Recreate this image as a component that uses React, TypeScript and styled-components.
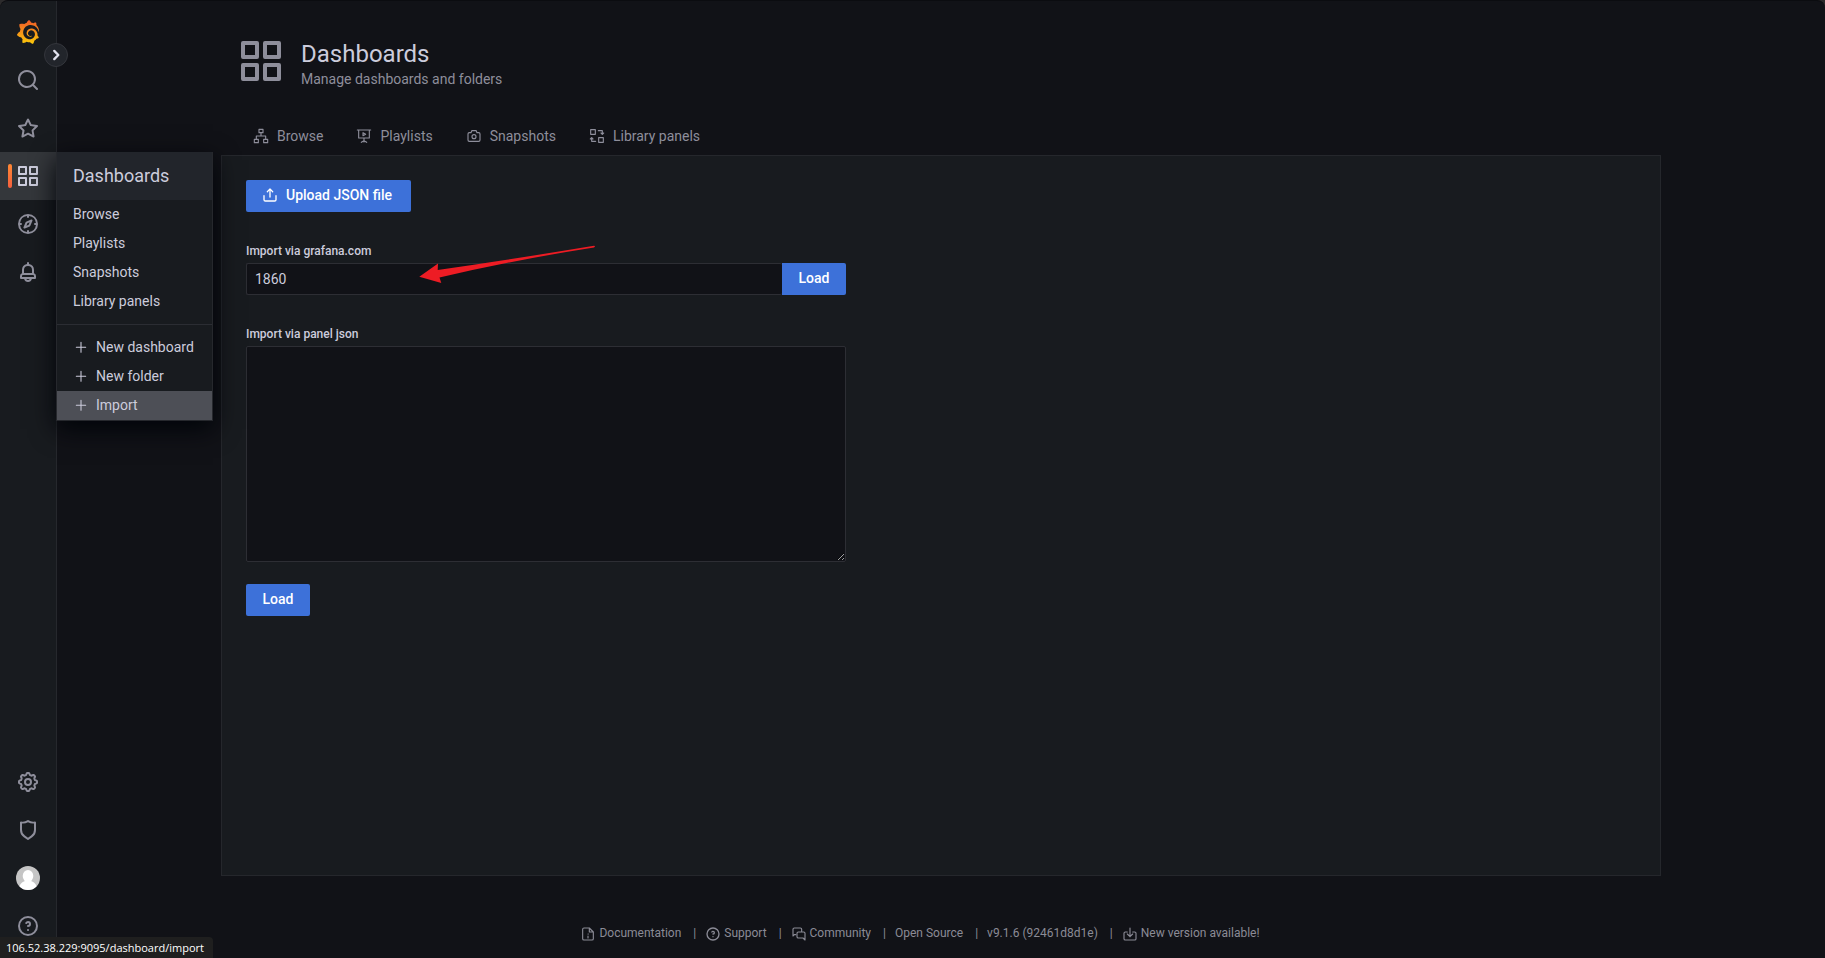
import React from 'react';
import styled, { createGlobalStyle, css } from 'styled-components';
import { SiGrafana } from 'react-icons/si';

const GlobalStyle = createGlobalStyle`
  *, *::before, *::after { box-sizing: border-box; }
  body {
    margin: 0;
    background: #2c2b2c;
    color: #ccccdc;
    font: 400 14px/22px Roboto, "Liberation Sans", sans-serif;
  }
  a { color: inherit; text-decoration: none; }
  button, input, textarea { font: inherit; color: inherit; }
  ul { list-style: none; margin: 0; padding: 0; }
`;

const paths = {
  apps: 'M10,13H3a1,1,0,0,0-1,1v7a1,1,0,0,0,1,1h7a1,1,0,0,0,1-1V14A1,1,0,0,0,10,13ZM9,20H4V15H9ZM21,2H14a1,1,0,0,0-1,1v7a1,1,0,0,0,1,1h7a1,1,0,0,0,1-1V3A1,1,0,0,0,21,2ZM20,9H15V4h5Zm1,4H14a1,1,0,0,0-1,1v7a1,1,0,0,0,1,1h7a1,1,0,0,0,1-1V14A1,1,0,0,0,21,13Zm-1,7H15V15h5ZM10,2H3A1,1,0,0,0,2,3v7a1,1,0,0,0,1,1h7a1,1,0,0,0,1-1V3A1,1,0,0,0,10,2ZM9,9H4V4H9Z',
  search: 'M21.71,20.29,18,16.61A9,9,0,1,0,16.61,18l3.68,3.68a1,1,0,0,0,1.42,0A1,1,0,0,0,21.71,20.29ZM11,18a7,7,0,1,1,7-7A7,7,0,0,1,11,18Z',
  star: 'M22,9.67A1,1,0,0,0,21.14,9l-5.69-.83L12.9,3a1,1,0,0,0-1.8,0L8.55,8.16,2.86,9a1,1,0,0,0-.81.68,1,1,0,0,0,.25,1l4.13,4-1,5.68A1,1,0,0,0,6.9,21.44L12,18.77l5.1,2.67a.93.93,0,0,0,.46.12,1,1,0,0,0,.59-.19,1,1,0,0,0,.4-1l-1-5.68,4.13-4A1,1,0,0,0,22,9.67Zm-6.15,4a1,1,0,0,0-.29.88l.72,4.2-3.76-2a1.06,1.06,0,0,0-.94,0l-3.76,2,.72-4.2a1,1,0,0,0-.29-.88l-3-3,4.21-.61a1,1,0,0,0,.76-.55L12,5.7l1.88,3.82a1,1,0,0,0,.76.55l4.21.61Z',
  compass: 'M12,2A10,10,0,1,0,22,12,10,10,0,0,0,12,2Zm1,17.93V19a1,1,0,0,0-2,0v.93A8,8,0,0,1,4.07,13H5a1,1,0,0,0,0-2H4.07A8,8,0,0,1,11,4.07V5a1,1,0,0,0,2,0V4.07A8,8,0,0,1,19.93,11H19a1,1,0,0,0,0,2h.93A8,8,0,0,1,13,19.93ZM15.14,7.55l-5,2.12a1,1,0,0,0-.52.52l-2.12,5a1,1,0,0,0,.21,1.1,1,1,0,0,0,.7.29.93.93,0,0,0,.4-.08l5-2.12a1,1,0,0,0,.52-.52l2.12-5a1,1,0,0,0-1.31-1.31Zm-2.49,5.1-2.28,1,1-2.28,2.28-1Z',
  bell: 'M18,13.18V10a6,6,0,0,0-5-5.91V3a1,1,0,0,0-2,0V4.09A6,6,0,0,0,6,10v3.18A3,3,0,0,0,4,16v2a1,1,0,0,0,1,1H8.14a4,4,0,0,0,7.72,0H19a1,1,0,0,0,1-1V16A3,3,0,0,0,18,13.18ZM8,10a4,4,0,0,1,8,0v3H8Zm4,10a2,2,0,0,1-1.72-1h3.44A2,2,0,0,1,12,20Zm6-3H6V16a1,1,0,0,1,1-1H17a1,1,0,0,1,1,1Z',
  shield: 'M19.63,3.65a1,1,0,0,0-.84-.2,8,8,0,0,1-6.22-1.27,1,1,0,0,0-1.14,0A8,8,0,0,1,5.21,3.45a1,1,0,0,0-.84.2A1,1,0,0,0,4,4.43v7.45a9,9,0,0,0,3.77,7.33l3.65,2.6a1,1,0,0,0,1.16,0l3.65-2.6A9,9,0,0,0,20,11.88V4.43A1,1,0,0,0,19.63,3.65ZM18,11.88a7,7,0,0,1-2.93,5.7L12,19.77,8.93,17.58A7,7,0,0,1,6,11.88V5.58a10,10,0,0,0,6-1.39,10,10,0,0,0,6,1.39Z',
  question: 'M11.29,15.29a1.58,1.58,0,0,0-.12.15.76.76,0,0,0-.09.18.64.64,0,0,0-.06.18,1.36,1.36,0,0,0,0,.2.84.84,0,0,0,.08.38.9.9,0,0,0,.54.54.94.94,0,0,0,.76,0,.9.9,0,0,0,.54-.54A1,1,0,0,0,13,16a1,1,0,0,0-.29-.71A1,1,0,0,0,11.29,15.29ZM12,2A10,10,0,1,0,22,12,10,10,0,0,0,12,2Zm0,18a8,8,0,1,1,8-8A8,8,0,0,1,12,20ZM12,7A3,3,0,0,0,9.4,8.5a1,1,0,1,0,1.73,1A1,1,0,0,1,12,9a1,1,0,0,1,0,2,1,1,0,1,0,0,2,3,3,0,0,0,0-6Z',
  upload: 'M8.71,7.71,11,5.41V15a1,1,0,0,0,2,0V5.41l2.29,2.3a1,1,0,0,0,1.42,0,1,1,0,0,0,0-1.42l-4-4a1,1,0,0,0-.33-.21,1,1,0,0,0-.76,0,1,1,0,0,0-.33.21l-4,4A1,1,0,1,0,8.71,7.71ZM21,12a1,1,0,0,0-1,1v6a1,1,0,0,1-1,1H5a1,1,0,0,1-1-1V13a1,1,0,0,0-2,0v6a3,3,0,0,0,3,3H19a3,3,0,0,0,3-3V13A1,1,0,0,0,21,12Z',
};

const outlines = {
  sitemap: 'M9 2h6v5H9zM12 7v5M5 17v-5h14v5M2 17h6v5H2zM16 17h6v5h-6z',
  presentation: 'M2 3h20M4 3v12h16V3M12 15v6M8 21.500l4-2.500l4 2.500M10.500 7v4.500l4-2.200z',
  camera: 'M5 7h2.500l1.200-3h6.600l1.200 3H19a2 2 0 0 1 2 2v9a2 2 0 0 1-2 2H5a2 2 0 0 1-2-2V9a2 2 0 0 1 2-2zM15 13a3 3 0 1 1-6 0a3 3 0 0 1 6 0z',
  library: 'M2.500 2.500h7v7h-7zM14.500 14.500h7v7h-7zM14 4h6v5M18 7.500l2 2l2-2M10 20H4v-5M2 16.500l2-2l2 2',
  document: 'M14 3H6a2 2 0 0 0-2 2v14a2 2 0 0 0 2 2h12a2 2 0 0 0 2-2V9zM14 3v6h6M12 12h.5M12 15v3',
  comments: 'M7 13H5l-2 2V5a2 2 0 0 1 2-2h9a2 2 0 0 1 2 2v3M11 9h8a2 2 0 0 1 2 2v10l-3-3h-7a2 2 0 0 1-2-2v-5a2 2 0 0 1 2-2z',
  download: 'M8 9H5a2 2 0 0 0-2 2v8a2 2 0 0 0 2 2h14a2 2 0 0 0 2-2v-8a2 2 0 0 0-2-2h-3M12 3v13M8 12l4 4l4-4',
  plus: 'M12 5v15M5 12.500h14',
  chevron: 'M9 5l7 7l-7 7',
  cog: (() => {
    const points: string[] = [];
    for (let i = 0; i < 96; i += 1) {
      const angle = (i / 96) * Math.PI * 2;
      const r = 8.1 + 0.95 * Math.tanh(2.4 * Math.cos(8 * angle));
      points.push(`${(12 + r * Math.sin(angle)).toFixed(2)} ${(12 - r * Math.cos(angle)).toFixed(2)}`);
    }
    return `M${points.join('L')}ZM15 12a3 3 0 1 1-6 0a3 3 0 0 1 6 0z`;
  })(),
};

type IconName = keyof typeof paths | keyof typeof outlines;

const Svg = styled.svg`
  display: block;
  flex: none;
`;

function Icon({ name, size = 24, weight = 2 }: { name: IconName; size?: number; weight?: number }) {
  return (
    <Svg width={size} height={size} viewBox="0 0 24 24" aria-hidden="true">
      {name in paths ? (
        <path fill="currentColor" d={paths[name as keyof typeof paths]} />
      ) : (
        <path
          fill="none"
          stroke="currentColor"
          strokeWidth={weight}
          strokeLinejoin="round"
          strokeLinecap="round"
          d={outlines[name as keyof typeof outlines]}
        />
      )}
    </Svg>
  );
}

const Shell = styled.div`
  display: flex;
  min-height: 100vh;
  background: #111217;
  border-top: 1px solid #0b0c10;
  border-radius: 8px 8px 0 0;
`;

const Sidebar = styled.nav`
  position: relative;
  z-index: 2;
  flex: none;
  display: flex;
  flex-direction: column;
  width: 57px;
  padding: 7px 0 8px;
  background: #181b1f;
  border-right: 1px solid #26282d;
  border-radius: 8px 0 0 0;
`;

const GradientDefs = styled.svg`
  position: absolute;
`;

const NavGroup = styled.ul<{ $bottom?: boolean }>`
  ${(p) => p.$bottom && 'margin-top: auto;'}
`;

const NavItem = styled.li`
  position: relative;
`;

const NavLink = styled.a<{ $active?: boolean }>`
  display: flex;
  align-items: center;
  justify-content: center;
  height: 48px;
  color: #8e8e9b;
  ${(p) =>
    p.$active &&
    css`
      color: #ccccdc;
      background: #34373b;
      &::before {
        content: '';
        position: absolute;
        left: 8px;
        top: 12px;
        width: 4px;
        height: 24px;
        border-radius: 2px;
        background: linear-gradient(#ff8833, #f55f3e);
      }
    `}
`;

const Expand = styled.button`
  position: absolute;
  z-index: 1;
  top: 42px;
  right: -12px;
  display: flex;
  align-items: center;
  justify-content: center;
  width: 24px;
  height: 24px;
  padding: 0;
  color: #e0e0ec;
  background: #22252b;
  border: 1px solid #34363c;
  border-radius: 50%;
`;

const Flyout = styled.div`
  position: absolute;
  top: 0;
  left: 100%;
  width: 157px;
  background: #181b1f;
  border: 1px solid #26282d;
  border-top: 0;
  box-shadow: 0 8px 24px rgb(1, 4, 9);
`;

const FlyoutTitle = styled.a`
  display: block;
  padding: 0 16px;
  font-size: 18px;
  line-height: 48px;
  background: #22252b;
`;

const FlyoutLink = styled.a<{ $active?: boolean }>`
  display: flex;
  align-items: center;
  gap: 7px;
  height: 29px;
  padding: 0 16px 2px;
  white-space: nowrap;
  background: ${(p) => (p.$active ? '#4d4f56' : 'transparent')};
`;

const FlyoutDivider = styled.hr`
  height: 1px;
  margin: 8px 0;
  border: 0;
  background: #2b2d33;
`;

const Main = styled.main`
  flex: 1;
  min-width: 0;
  display: flex;
  flex-direction: column;
`;

const Container = styled.div`
  flex: 1;
  display: flex;
  flex-direction: column;
  width: 100%;
  max-width: 1440px;
  margin: 0 auto;
`;

const PageHeader = styled.header`
  display: flex;
  gap: 16px;
  padding: 36px 16px 35px;
  color: #8e8e9b;
`;

const PageTitle = styled.h1`
  margin: 0;
  padding-top: 2px;
  font-size: 24px;
  font-weight: 400;
  line-height: 30px;
  color: #ccccdc;
`;

const Subtitle = styled.p`
  margin: 0;
  line-height: 20px;
`;

const Tabs = styled.nav`
  display: flex;
  gap: 33px;
  padding: 0 32px 7px;
`;

const Tab = styled.a`
  display: flex;
  align-items: center;
  gap: 8px;
  line-height: 24px;
  color: #8e8e9b;
`;

const Panel = styled.section`
  flex: 1;
  padding: 24px;
  background: #181b1f;
  border: 1px solid #25272c;
`;

const Form = styled.form`
  display: flex;
  flex-direction: column;
  align-items: flex-start;
  width: 600px;
  max-width: 100%;
`;

const Button = styled.button<{ $attached?: boolean; $wide?: boolean }>`
  display: flex;
  align-items: center;
  justify-content: ${(p) => (p.$wide ? 'flex-start' : 'center')};
  gap: 8px;
  min-width: ${(p) => (p.$wide ? '165px' : '64px')};
  height: 32px;
  padding: 0 16px 2px;
  font-weight: 500;
  color: #ffffff;
  background: #3d71d9;
  border: 0;
  border-radius: ${(p) => (p.$attached ? '0 2px 2px 0' : '2px')};
`;

const Label = styled.label`
  margin-top: 32px;
  margin-bottom: 4px;
  font-size: 12px;
  font-weight: 500;
  line-height: 15px;
`;

const InputRow = styled.div`
  position: relative;
  display: flex;
  width: 100%;
`;

const field = css`
  background: #111217;
  border: 1px solid #2d2e34;
  border-radius: 2px;
  outline: none;
`;

const TextInput = styled.input`
  ${field}
  flex: 1;
  min-width: 0;
  height: 32px;
  padding: 0 8px;
  border-right: 0;
`;

const TextArea = styled.textarea`
  ${field}
  display: block;
  width: 100%;
  height: 216px;
  margin-bottom: 22px;
  padding: 8px;
`;

const Arrow = styled.svg`
  position: absolute;
  left: 168px;
  top: -20px;
  pointer-events: none;
`;

const Footer = styled.footer`
  display: flex;
  justify-content: center;
  padding: 48px 42px 16px 0;
  font-size: 12px;
  line-height: 18px;
  color: #8b8b96;
`;

const FooterList = styled.ul`
  display: flex;
`;

const FooterItem = styled.li`
  display: flex;
  & + &::before {
    content: '|';
    padding: 0 9px 0 12px;
  }
`;

const FooterLink = styled.a`
  display: flex;
  align-items: center;
  gap: 3px;
  svg {
    margin-top: 2px;
  }
`;

const StatusBar = styled.div`
  position: fixed;
  z-index: 3;
  left: 0;
  bottom: 0;
  padding: 0 9px 0 6px;
  font: 11px/21px "Open Sans", "Noto Sans", sans-serif;
  color: #ffffff;
  background: #1f1f1f;
  border-top-right-radius: 4px;
`;

const topNav: { icon: IconName; label: string }[] = [
  { icon: 'search', label: 'Search dashboards' },
  { icon: 'star', label: 'Starred' },
  { icon: 'apps', label: 'Dashboards' },
  { icon: 'compass', label: 'Explore' },
  { icon: 'bell', label: 'Alerting' },
];

const tabs: { icon: IconName; label: string }[] = [
  { icon: 'sitemap', label: 'Browse' },
  { icon: 'presentation', label: 'Playlists' },
  { icon: 'camera', label: 'Snapshots' },
  { icon: 'library', label: 'Library panels' },
];

const footerLinks: { icon?: IconName; label: string }[] = [
  { icon: 'document', label: 'Documentation' },
  { icon: 'question', label: 'Support' },
  { icon: 'comments', label: 'Community' },
  { label: 'Open Source' },
  { label: 'v9.1.6 (92461d8d1e)' },
  { icon: 'download', label: 'New version available!' },
];

function DashboardsMenu() {
  return (
    <Flyout>
      <FlyoutTitle href="#dashboards">Dashboards</FlyoutTitle>
      {tabs.map((t) => (
        <FlyoutLink key={t.label} href="#browse">{t.label}</FlyoutLink>
      ))}
      <FlyoutDivider />
      {['New dashboard', 'New folder', 'Import'].map((label) => (
        <FlyoutLink key={label} href="#new" $active={label === 'Import'}>
          <Icon name="plus" size={16} weight={1.6} />
          {label}
        </FlyoutLink>
      ))}
    </Flyout>
  );
}

function Avatar() {
  return (
    <Svg width="24" height="24" viewBox="0 0 24 24" aria-hidden="true">
      <clipPath id="avatar-clip"><circle cx="12" cy="12" r="12" /></clipPath>
      <g clipPath="url(#avatar-clip)">
        <rect width="24" height="24" fill="#c5c5c5" />
        <ellipse cx="12" cy="10" rx="5.3" ry="6" fill="#fff" />
        <path d="M3 24c0-6 3-8 6-9h6c3 1 6 3 6 9z" fill="#fff" />
      </g>
    </Svg>
  );
}

export default function App() {
  return (
    <>
      <GlobalStyle />
      <Shell>
        <Sidebar aria-label="Main menu">
          <GradientDefs width="0" height="0" aria-hidden="true">
            <linearGradient id="brand" x1="0" y1="0" x2="0" y2="1">
              <stop offset="0" stopColor="#f05a28" />
              <stop offset="1" stopColor="#fbca0a" />
            </linearGradient>
          </GradientDefs>
          <NavLink href="#home" aria-label="Home">
            <SiGrafana size={24} fill="url(#brand)" />
          </NavLink>
          <Expand type="button" aria-label="Expand navigation">
            <Icon name="chevron" size={14} weight={4} />
          </Expand>
          <NavGroup>
            {topNav.map((n) => (
              <NavItem key={n.label}>
                <NavLink href="#nav" aria-label={n.label} $active={n.icon === 'apps'}>
                  <Icon name={n.icon} />
                </NavLink>
                {n.icon === 'apps' && <DashboardsMenu />}
              </NavItem>
            ))}
          </NavGroup>
          <NavGroup $bottom>
            <NavItem><NavLink href="#config" aria-label="Configuration"><Icon name="cog" /></NavLink></NavItem>
            <NavItem><NavLink href="#admin" aria-label="Server admin"><Icon name="shield" /></NavLink></NavItem>
            <NavItem><NavLink href="#profile" aria-label="Profile"><Avatar /></NavLink></NavItem>
            <NavItem><NavLink href="#help" aria-label="Help"><Icon name="question" /></NavLink></NavItem>
          </NavGroup>
        </Sidebar>
        <Main>
          <Container>
            <PageHeader>
              <Icon name="apps" size={48} />
              <div>
                <PageTitle>Dashboards</PageTitle>
                <Subtitle>Manage dashboards and folders</Subtitle>
              </div>
            </PageHeader>
            <Tabs aria-label="Sections">
              {tabs.map((t) => (
                <Tab key={t.label} href="#tab">
                  <Icon name={t.icon} size={16} weight={1.7} />
                  {t.label}
                </Tab>
              ))}
            </Tabs>
            <Panel>
              <Form onSubmit={(e) => e.preventDefault()}>
                <Button type="button" $wide>
                  <Icon name="upload" size={16} />
                  Upload JSON file
                </Button>
                <Label htmlFor="gcom">Import via grafana.com</Label>
                <InputRow>
                  <TextInput id="gcom" defaultValue="1860" />
                  <Button type="submit" $attached>Load</Button>
                  <Arrow width="190" height="50" viewBox="0 0 190 50" aria-hidden="true">
                    <path d="M5.300 33.700L24 20.500L23.700 27Q100 16 180 2.800Q182 3 180 4.500Q100 17 25.500 34.500L27.300 40Z" fill="#ed1c24" />
                  </Arrow>
                </InputRow>
                <Label htmlFor="json">Import via panel json</Label>
                <TextArea id="json" />
                <Button type="submit">Load</Button>
              </Form>
            </Panel>
          </Container>
          <Footer>
            <FooterList>
              {footerLinks.map((f) => (
                <FooterItem key={f.label}>
                  <FooterLink href="#footer">
                    {f.icon && <Icon name={f.icon} size={16} weight={1.7} />}
                    {f.label}
                  </FooterLink>
                </FooterItem>
              ))}
            </FooterList>
          </Footer>
        </Main>
      </Shell>
      <StatusBar>106.52.38.229:9095/dashboard/import</StatusBar>
    </>
  );
}
